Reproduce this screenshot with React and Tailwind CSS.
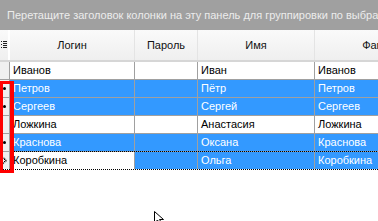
import React from "react";

const FONT = { fontFamily: '"Liberation Sans", Tahoma, sans-serif' };

const COLS = [
  { key: "login", title: "Логин", w: "w-[125px]" },
  { key: "pass", title: "Пароль", w: "w-[63px]" },
  { key: "name", title: "Имя", w: "w-[117px]" },
  { key: "surname", title: "Фамилия", w: "w-[142px]" },
];

const ROWS = [
  { login: "Иванов", pass: "", name: "Иван", surname: "Иванов", sel: false, mark: "" },
  { login: "Петров", pass: "", name: "Пётр", surname: "Петров", sel: true, mark: "dot" },
  { login: "Сергеев", pass: "", name: "Сергей", surname: "Сергеев", sel: true, mark: "dot" },
  { login: "Ложкина", pass: "", name: "Анастасия", surname: "Ложкина", sel: false, mark: "" },
  { login: "Краснова", pass: "", name: "Оксана", surname: "Краснова", sel: true, mark: "dot" },
  { login: "Коробкина", pass: "", name: "Ольга", surname: "Коробкина", sel: true, mark: "cur" },
];

const Marker = ({ mark }) => {
  if (mark === "dot") return <span className="block w-[3px] h-[3px] rounded-full bg-black ml-[3px]" />;
  if (mark === "cur")
    return (
      <svg width="6" height="9" viewBox="0 0 6 9" className="ml-[2px]">
        <path d="M0.5 0.5 L5 4.5 L0.5 8.5" fill="none" stroke="#000" strokeWidth="1" strokeDasharray="1 1" />
        <path d="M1.5 2.5 L3.5 4.5 L1.5 6.5" fill="none" stroke="#000" strokeWidth="1" />
      </svg>
    );
  return null;
};

export default function App() {
  return (
    <div className="relative w-[378px] h-[221px] overflow-hidden bg-white text-[11px] text-black" style={FONT}>
      {/* Group panel */}
      <div className="h-[30px] bg-[#a0a0a0] text-[#ececec] flex items-center pl-[7px] whitespace-nowrap text-[11px]">
        Перетащите заголовок колонки на эту панель для группировки по выбранной колонке
      </div>

      {/* Header */}
      <div className="flex h-[32px] bg-gradient-to-b from-[#fafafa] to-[#efefef] border-b-2 border-[#d6d6d6] whitespace-nowrap">
        <div className="w-[10px] shrink-0 flex items-center justify-center border-r-2 border-white">
          <svg width="6" height="8" viewBox="0 0 6 8">
            <rect x="0" y="0" width="1" height="1" fill="#222" />
            <rect x="0" y="3" width="1" height="1" fill="#222" />
            <rect x="0" y="6" width="1" height="1" fill="#222" />
            <rect x="2" y="0" width="4" height="1" fill="#222" />
            <rect x="2" y="2" width="4" height="1" fill="#222" />
            <rect x="2" y="4" width="4" height="1" fill="#222" />
            <rect x="2" y="6" width="4" height="1" fill="#222" />
          </svg>
        </div>
        {COLS.map((c) => (
          <div key={c.key} className={`${c.w} shrink-0 flex items-center justify-center border-r border-[#e4e4e4] text-[#111]`}>
            {c.title}
          </div>
        ))}
      </div>

      {/* Rows */}
      {ROWS.map((r, i) => {
        const cur = r.mark === "cur";
        return (
          <div
            key={i}
            className={`flex h-[18px] whitespace-nowrap border-b ${cur ? "border-dotted border-black" : "border-[#a0a0a0]"}`}
          >
            <div className="w-[10px] shrink-0 bg-[#f0f0f0] border-r border-[#a0a0a0] flex items-center">
              <Marker mark={r.mark} />
            </div>
            <div className={`flex shrink-0 ${cur ? "border-t border-dotted border-black -mt-px" : ""}`}>
              {COLS.map((c, ci) => {
                const white = !r.sel || (cur && ci === 0);
                return (
                  <div
                    key={c.key}
                    className={`${c.w} shrink-0 flex items-center pl-[3px] border-r border-[#a0a0a0] ${
                      white ? "bg-white text-black" : "bg-[#3399ff] text-white"
                    }`}
                  >
                    {r[c.key]}
                  </div>
                );
              })}
            </div>
          </div>
        );
      })}

      {/* Red highlight frame */}
      <div className="absolute left-0 top-[81px] w-[14px] h-[92px] border-[3px] border-r-4 border-[#ff0000]" />

      {/* Mouse cursor */}
      <svg className="absolute left-[154px] top-[211px]" width="12" height="14" viewBox="0 0 12 14">
        <path d="M0.5 0.5 L0.5 12 L3.5 9 L6 13.5 L8 12.5 L5.5 8.5 L9.5 8.5 Z" fill="#fff" stroke="#000" strokeWidth="1" />
      </svg>
    </div>
  );
}
